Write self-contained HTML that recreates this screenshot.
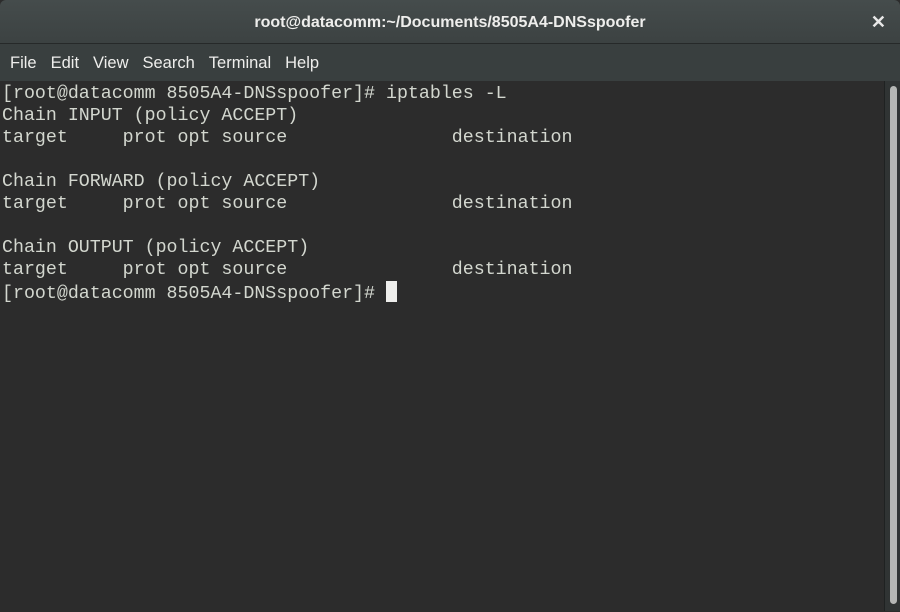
<!DOCTYPE html>
<html><head><style>
body{margin:0;width:900px;height:611px;overflow:hidden;background:#2c2c2c;font-family:"Liberation Sans",sans-serif}
#title{position:absolute;left:0;top:0;width:900px;height:43px;background:linear-gradient(#454c4c,#3c4242);border-bottom:1px solid #262929;border-radius:6px 6px 0 0;color:#eeeeec;font-weight:bold;font-size:16px;text-align:center;line-height:45px}
#x{position:absolute;right:14px;top:0;font-size:18px;color:#e8e8e8}
#menu{position:absolute;left:0;top:44px;width:900px;height:37px;background:#393f3f;color:#eeeeec;font-size:16.5px;line-height:39px}
#menu span{margin-left:10px;margin-right:4px}
#term{position:absolute;left:0;top:82px;width:884px;height:529px;background:#2c2c2c;color:#d3d7cf;font-family:"Liberation Mono",monospace;font-size:18.3px;line-height:22px;white-space:pre;padding-top:1px;padding-left:2px}
#sb{position:absolute;left:884px;top:81px;width:16px;height:530px;background:#303434;border-left:1px solid #1f2222}
#thumb{position:absolute;left:5px;top:5px;width:7px;height:518px;background:#b5b7b5;border-radius:4px}
.cur{display:inline-block;width:11px;height:21px;background:#eeeeec;vertical-align:-4px}
</style></head><body>
<div id="title">root@datacomm:~/Documents/8505A4-DNSspoofer<span id="x">✕</span></div>
<div id="menu"><span>File</span><span>Edit</span><span>View</span><span>Search</span><span>Terminal</span><span>Help</span></div>
<div id="term">[root@datacomm 8505A4-DNSspoofer]# iptables -L
Chain INPUT (policy ACCEPT)
target     prot opt source               destination

Chain FORWARD (policy ACCEPT)
target     prot opt source               destination

Chain OUTPUT (policy ACCEPT)
target     prot opt source               destination
[root@datacomm 8505A4-DNSspoofer]# <span class="cur"></span></div>
<div id="sb"><div id="thumb"></div></div>
</body></html>
